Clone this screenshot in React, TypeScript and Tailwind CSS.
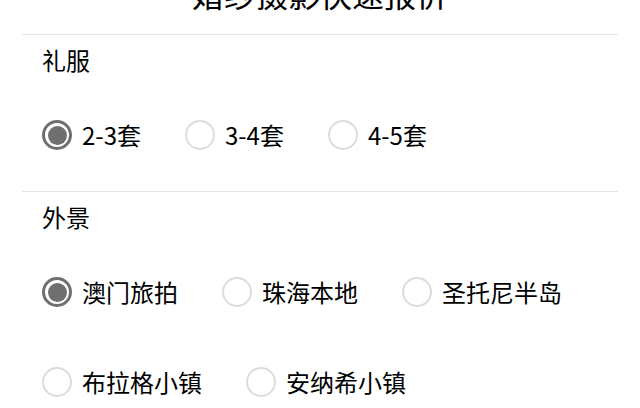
import { useState } from 'react';

interface OptionGroup {
  title: string;
  options: string[];
}

const groups: OptionGroup[] = [
  { title: '礼服', options: ['2-3套', '3-4套', '4-5套'] },
  { title: '外景', options: ['澳门旅拍', '珠海本地', '圣托尼半岛', '布拉格小镇', '安纳希小镇'] },
];

function Radio({ checked }: { checked: boolean }) {
  return checked ? (
    <span className="flex h-[30px] w-[30px] shrink-0 items-center justify-center rounded-full border-[3px] border-[#6f6f6f]">
      <span className="h-[19px] w-[19px] rounded-full bg-[#6f6f6f]" />
    </span>
  ) : (
    <span className="h-[30px] w-[30px] shrink-0 rounded-full border-2 border-[#dcdcdc]" />
  );
}

function Section({ group }: { group: OptionGroup }) {
  const [picked, setPicked] = useState(0);
  return (
    <section className="border-t border-[#e3e6e9] px-5 pt-[7px]">
      <h2 className="text-[24px] leading-[36px] font-normal">{group.title}</h2>
      <div className="flex flex-wrap gap-x-[44px] gap-y-[54px] pt-[39px] pb-[38px]">
        {group.options.map((opt, i) => (
          <label
            key={opt}
            className="flex h-9 cursor-pointer items-center gap-[10px] text-[24px] leading-[36px]"
            onClick={() => setPicked(i)}
          >
            <Radio checked={picked === i} />
            <span>{opt}</span>
          </label>
        ))}
      </div>
    </section>
  );
}

export default function App() {
  return (
    <div
      className="mx-[22px] -mt-[31px] bg-white text-black"
      style={{ fontFamily: '"Noto Sans CJK SC", "Noto Sans", sans-serif' }}
    >
      <h1 className="mb-[17px] text-center text-[32px] leading-[48px] font-normal">婚纱摄影快速报价</h1>
      {groups.map((g) => (
        <Section key={g.title} group={g} />
      ))}
    </div>
  );
}
